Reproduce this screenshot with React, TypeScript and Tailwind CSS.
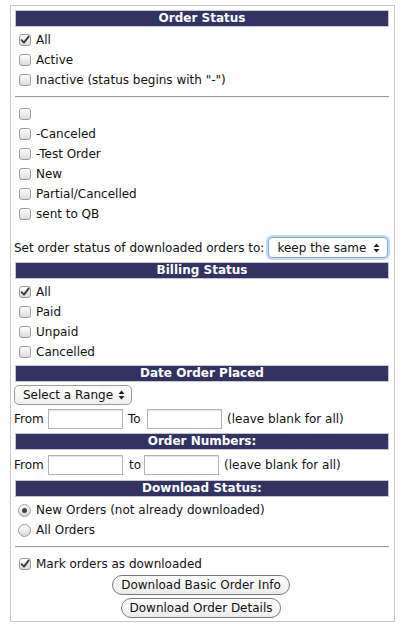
import React from "react";

function Box({ checked }: { checked?: boolean }) {
  return (
    <span className="relative inline-flex h-[12px] w-[12px] shrink-0 items-center justify-center rounded-[3px] border border-[#9a9a9a] bg-gradient-to-b from-[#ffffff] to-[#dcdcdc] shadow-[inset_0_1px_0_#fff]">
      {checked && (
        <svg width="10" height="10" viewBox="0 0 10 10" className="absolute">
          <path d="M1.6 5.2 L4 7.6 L8.6 1.6" fill="none" stroke="#3a3a3a" strokeWidth="1.9" strokeLinecap="round" strokeLinejoin="round" />
        </svg>
      )}
    </span>
  );
}

function Radio({ checked }: { checked?: boolean }) {
  return (
    <span className="relative inline-flex h-[13px] w-[13px] shrink-0 items-center justify-center rounded-full border border-[#9a9a9a] bg-gradient-to-b from-[#ffffff] to-[#d8d8d8]">
      {checked && <span className="h-[5px] w-[5px] rounded-full bg-[#444]" />}
    </span>
  );
}

function Header({ title }: { title: string }) {
  return (
    <div className="mr-[5px] ml-[2px] h-[17px] border border-[#c6c6cc] bg-[#333363] text-center text-[12px] leading-[15px] font-bold text-white">
      {title}
    </div>
  );
}

function Check({ label, checked }: { label: string; checked?: boolean }) {
  return (
    <div className="flex h-[20px] items-center gap-[5px] pl-[6px]">
      <Box checked={checked} />
      <span>{label}</span>
    </div>
  );
}

function Arrows() {
  return (
    <svg width="7" height="10" viewBox="0 0 7 10">
      <path d="M3.5 0.5 L6.5 4 L0.5 4 Z" fill="#222" />
      <path d="M3.5 9.5 L6.5 6 L0.5 6 Z" fill="#222" />
    </svg>
  );
}

function Field() {
  return <span className="inline-block h-[20px] w-[75px] border border-[#b4b4b4] bg-white shadow-[inset_0_1px_1px_rgba(0,0,0,0.12)]" />;
}

function Rule() {
  return <div className="mr-[5px] ml-[2px] border-t border-t-[#9c9c9c] border-b border-b-[#eeeeee]" />;
}

function Pill({ label }: { label: string }) {
  return (
    <button className="h-[20px] rounded-full border border-[#7a7a7a] bg-gradient-to-b from-[#ffffff] to-[#ececec] px-[8px] text-[12px] leading-[18px] text-[#111]">
      {label}
    </button>
  );
}

export default function App() {
  return (
    <div className="bg-white pt-[5px] pl-[10px] text-[12px] text-[#111]" style={{ fontFamily: '"DejaVu Sans", Verdana, sans-serif' }}>
      <div className="w-[385px] border border-[#c8c8c8] pt-[4px] pl-[2px] pb-[3px]">
        <Header title="Order Status" />
        <div className="mt-[3px]">
          <Check label="All" checked />
          <Check label="Active" />
          <Check label="Inactive (status begins with &quot;-&quot;)" />
        </div>
        <div className="mt-[6px] mb-[6px]">
          <Rule />
        </div>
        <Check label="" />
        <Check label="-Canceled" />
        <Check label="-Test Order" />
        <Check label="New" />
        <Check label="Partial/Cancelled" />
        <Check label="sent to QB" />
        <div className="mt-[13px] mb-[4px] flex h-[21px] items-center pl-[1px]">
          <span>Set order status of downloaded orders to:</span>
          <span className="ml-[4px] flex h-[21px] w-[120px] items-center justify-between rounded-[4px] border border-[#7fa6da] bg-white pr-[7px] pl-[8px] shadow-[0_0_0_2px_rgba(120,165,225,0.4)]">
            <span>keep the same</span>
            <Arrows />
          </span>
        </div>
        <Header title="Billing Status" />
        <div className="mt-[3px]">
          <Check label="All" checked />
          <Check label="Paid" />
          <Check label="Unpaid" />
          <Check label="Cancelled" />
        </div>
        <div className="mt-[3px]">
          <Header title="Date Order Placed" />
        </div>
        <div className="mt-[3px] pl-[1px]">
          <span className="flex h-[20px] w-[118px] items-center justify-between rounded-[5px] border border-[#9a9a9a] bg-gradient-to-b from-[#ffffff] to-[#efefef] pr-[6px] pl-[8px]">
            <span>Select a Range</span>
            <Arrows />
          </span>
        </div>
        <div className="mt-[4px] flex h-[20px] items-center pl-[1px]">
          <span className="w-[34px]">From</span>
          <Field />
          <span className="ml-[5px] w-[19px]">To</span>
          <Field />
          <span className="ml-[5px]">(leave blank for all)</span>
        </div>
        <div className="mt-[4px]">
          <Header title="Order Numbers:" />
        </div>
        <div className="mt-[5px] flex h-[20px] items-center pl-[1px]">
          <span className="w-[34px]">From</span>
          <Field />
          <span className="ml-[6px] w-[15px]">to</span>
          <Field />
          <span className="ml-[5px]">(leave blank for all)</span>
        </div>
        <div className="mt-[5px]">
          <Header title="Download Status:" />
        </div>
        <div className="mt-[3px]">
          <div className="flex h-[20px] items-center gap-[5px] pl-[5px]">
            <Radio checked />
            <span>New Orders (not already downloaded)</span>
          </div>
          <div className="flex h-[20px] items-center gap-[5px] pl-[5px]">
            <Radio />
            <span>All Orders</span>
          </div>
        </div>
        <div className="mt-[6px] mb-[6px]">
          <Rule />
        </div>
        <Check label="Mark orders as downloaded" checked />
        <div className="mr-[5px] flex flex-col items-center gap-[3px] pt-[1px]">
          <Pill label="Download Basic Order Info" />
          <Pill label="Download Order Details" />
        </div>
      </div>
    </div>
  );
}
